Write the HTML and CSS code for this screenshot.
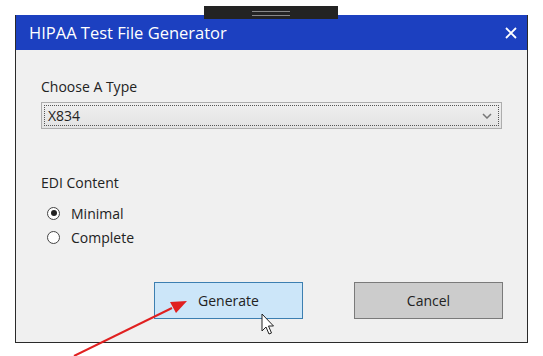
FILE: index.html
```html
<!DOCTYPE html>
<html>
<head>
<meta charset="utf-8">
<link rel="stylesheet" href="styles.css">
</head>
<body>
<div class="stage">
  <div class="window">
    <div class="titlebar">
      <span class="title">HIPAA Test File Generator</span>
      <svg class="close" width="12" height="12" viewBox="0 0 12 12"><path d="M1 1 L11 11 M11 1 L1 11" stroke="#fff" stroke-width="1.8"/></svg>
    </div>
    <div class="content">
      <div class="label first">Choose A Type</div>
      <div class="select">
        <span class="focus"></span>
        <span class="value">X834</span>
        <svg class="chev" width="10" height="6" viewBox="0 0 10 6"><path d="M1 1 L5 5 L9 1" fill="none" stroke="#777" stroke-width="1.5"/></svg>
      </div>
      <div class="label second">EDI Content</div>
      <div class="radios">
        <div class="radio"><span class="dot checked"></span><span>Minimal</span></div>
        <div class="radio"><span class="dot"></span><span>Complete</span></div>
      </div>
      <div class="buttons">
        <div class="btn gen">Generate</div>
        <div class="btn cancel">Cancel</div>
      </div>
    </div>
  </div>
  <div class="tab"><span class="grip"></span></div>
  <svg class="cursor" width="14" height="24" viewBox="0 0 14 24"><path d="M1 1 L1 18 L5 14 L8 21 L10.5 20 L7.5 13 L12.5 13 Z" fill="#fff" stroke="#222" stroke-width="1"/></svg>
  <svg class="arrow" width="543" height="356" viewBox="0 0 543 356"><line x1="74" y1="356" x2="172" y2="308" stroke="#e02020" stroke-width="2"/><path d="M187 301 L170 302 L176 313 Z" fill="#e02020"/></svg>
</div>
</body>
</html>
```
FILE: styles.css
```css
html, body { margin: 0; padding: 0; background: #fff; }
body { width: 543px; height: 356px; overflow: hidden; font-family: "Open Sans", "Noto Sans", sans-serif; }
.stage { position: relative; width: 543px; height: 356px; padding: 15px 0 0 15px; box-sizing: border-box; }
.window { width: 513px; border: 1px solid #2a2a2a; border-top: none; box-sizing: border-box; }
.titlebar { height: 35px; background: #1c40c0; display: flex; align-items: center; justify-content: space-between; padding: 0 10px 0 13px; color: #fff; }
.title { font-size: 16.5px; }
.content { background: #f0f0f0; height: 292px; padding: 27px 0 0 25px; box-sizing: border-box; color: #222; }
.label { font-size: 14px; line-height: 20px; }
.select { position: relative; margin-top: 5px; width: 461px; height: 27px; box-sizing: border-box; border: 1px solid #adadad; background: linear-gradient(#efefef, #e3e3e3); display: flex; align-items: center; padding-left: 6px; font-size: 14px; }
.focus { position: absolute; inset: 2px; border: 1px dotted #555; }
.chev { position: absolute; right: 9px; top: 10px; }
.second { margin-top: 44px; }
.radios { margin-top: 8px; display: flex; flex-direction: column; }
.radio { display: flex; align-items: center; height: 24px; font-size: 14px; gap: 11px; padding-left: 6px; }
.dot { width: 13px; height: 13px; border: 1px solid #444; border-radius: 50%; background: #fff; box-sizing: border-box; position: relative; }
.dot.checked::after { content: ""; position: absolute; left: 2.5px; top: 2.5px; width: 6px; height: 6px; border-radius: 50%; background: #222; }
.buttons { display: flex; gap: 51px; margin-top: 33px; padding-left: 113px; }
.btn { width: 149px; height: 37px; box-sizing: border-box; display: flex; align-items: center; justify-content: center; font-size: 14px; }
.gen { background: #cce6f9; border: 1px solid #3c7fb1; }
.cancel { background: #cccccc; border: 1px solid #7a7a7a; }
.tab { position: absolute; left: 204px; top: 6px; width: 134px; height: 13px; background: #232323; display: flex; justify-content: center; padding-top: 5px; box-sizing: border-box; }
.grip { width: 38px; height: 3px; border-top: 1px solid #888; border-bottom: 1px solid #888; }
.cursor { position: absolute; left: 261px; top: 313px; }
.arrow { position: absolute; left: 0; top: 0; pointer-events: none; }
```
